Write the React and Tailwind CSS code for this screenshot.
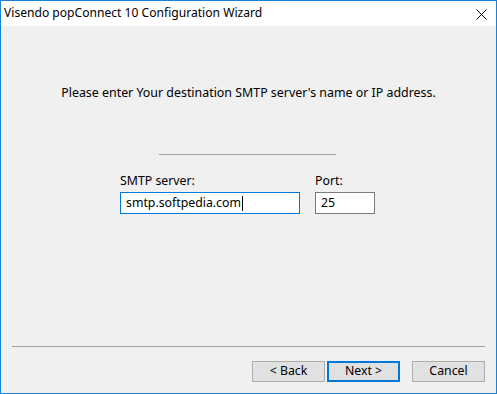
import React from 'react';

const font = { fontFamily: '"Noto Sans", "Open Sans", sans-serif' };

export default function App() {
  return (
    <div
      className="w-[497px] h-[394px] border border-[#1883d7] bg-[#f0f0f0] flex flex-col text-[12.3px] text-black"
      style={font}
    >
      {/* Title bar */}
      <div className="h-[25px] bg-white flex items-center justify-between pl-[3px] pr-[9px]">
        <span className="leading-none text-[12.1px]">Visendo popConnect 10 Configuration Wizard</span>
        <svg width="11" height="11" viewBox="0 0 11 11" className="mt-[1px]">
          <path d="M0.5 0.5 L10.5 10.5 M10.5 0.5 L0.5 10.5" stroke="#000" strokeWidth="1" />
        </svg>
      </div>

      {/* Body */}
      <div className="flex-1 flex flex-col">
        <p className="mt-[58px] text-center leading-[18px] text-[12.4px]">
          Please enter Your destination SMTP server's name or IP address.
        </p>

        <div className="mt-[52px] ml-[158px] w-[177px] h-px bg-[#a0a0a0]" />

        <div className="mt-[17px] ml-[119px] flex gap-[15px]">
          <div className="flex flex-col">
            <label className="leading-[18px] mb-[2px]">SMTP server:</label>
            <div className="w-[180px] h-[22px] border border-[#0078d7] bg-white flex items-center pl-[5px]">
              <span className="leading-none">smtp.softpedia.com</span>
              <span className="w-px h-[15px] bg-black ml-px" />
            </div>
          </div>
          <div className="flex flex-col">
            <label className="leading-[18px] mb-[2px]">Port:</label>
            <div className="w-[60px] h-[22px] border border-[#7a7a7a] bg-white flex items-center pl-[5px]">
              <span className="leading-none">25</span>
            </div>
          </div>
        </div>

        <div className="mt-auto mx-[11px] h-px bg-[#a0a0a0]" />

        <div className="mt-[14px] mb-[11px] mr-[11px] flex justify-end">
          <button className="w-[73px] h-[21px] border border-[#adadad] bg-[#e1e1e1] leading-none">
            &lt; Back
          </button>
          <button className="ml-[2px] w-[73px] h-[21px] border-2 border-[#0078d7] bg-[#e1e1e1] leading-none">
            Next &gt;
          </button>
          <button className="ml-[12px] w-[73px] h-[21px] border border-[#adadad] bg-[#e1e1e1] leading-none">
            Cancel
          </button>
        </div>
      </div>
    </div>
  );
}
